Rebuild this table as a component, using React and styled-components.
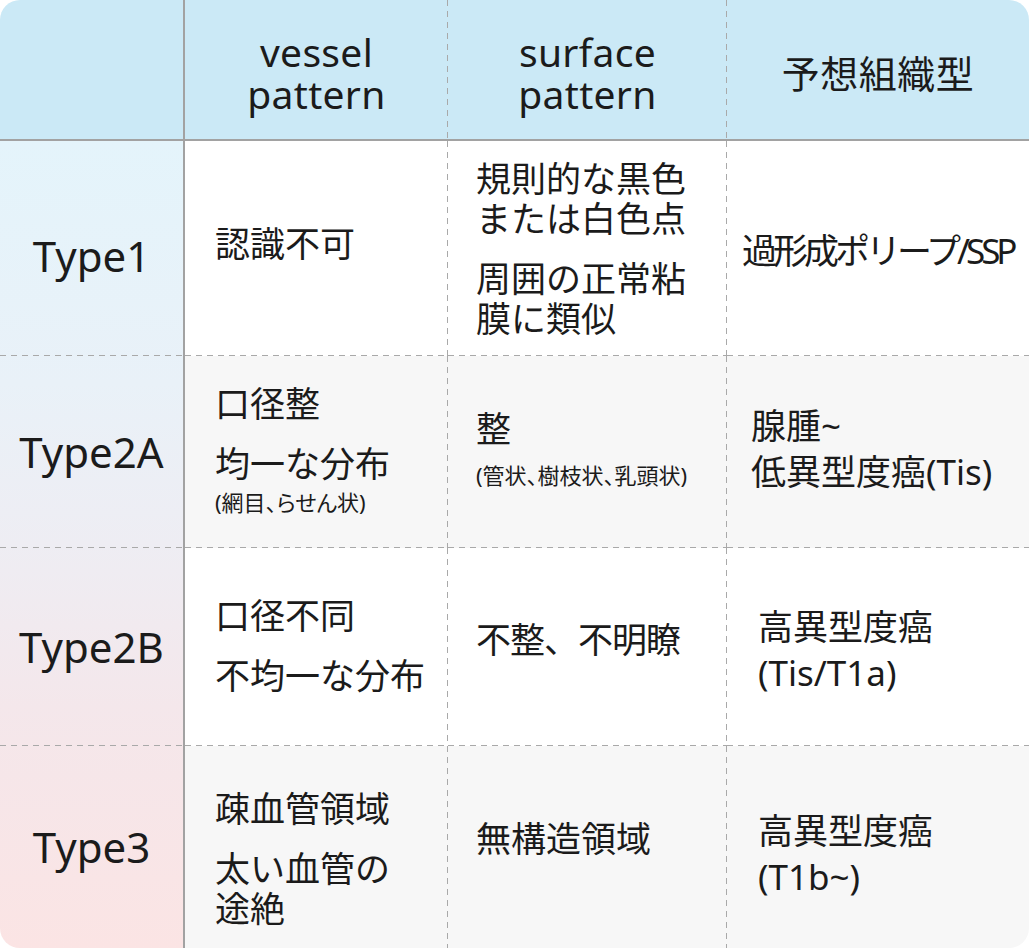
import React from "react";
import styled, { createGlobalStyle, css } from "styled-components";

const GlobalStyle = createGlobalStyle`
  html, body { margin: 0; padding: 0; background: #ffffff; }
  body {
    font-family: "Noto Sans", "Noto Sans CJK JP", sans-serif;
    color: #1b1b1b;
  }
`;

const LINE = "#a9a9a9";
const SOLID = "#a2a2a2";
const dashH = `repeating-linear-gradient(to right, ${LINE} 0 6px, transparent 6px 11px)`;
const dashV = `repeating-linear-gradient(to bottom, ${LINE} 0 6px, transparent 6px 11px)`;

const edges = ({ $right, $bottom, $bg }) => {
  const layers = [];
  const pos = [];
  const size = [];
  if ($right) {
    layers.push(dashV);
    pos.push("right top");
    size.push("1px 100%");
  }
  if ($bottom) {
    layers.push(dashH);
    pos.push("left bottom");
    size.push("100% 1px");
  }
  return css`
    background-color: ${$bg || "transparent"};
    background-image: ${layers.length ? layers.join(", ") : "none"};
    background-position: ${pos.length ? pos.join(", ") : "0 0"};
    background-size: ${size.length ? size.join(", ") : "auto"};
    background-repeat: no-repeat;
  `;
};

const Table = styled.div`
  width: 1029px;
  height: 948px;
  display: grid;
  grid-template-columns: 185px 263px 279px 302px;
  grid-template-rows: 141px 215px 192px 198px 202px;
  border-radius: 20px;
  overflow: hidden;
  background-color: #ffffff;
  background-image: linear-gradient(
    to bottom,
    #e4f4fb 0%,
    #e9f1f8 30%,
    #eeedf3 50%,
    #f4e7eb 70%,
    #fbe4e4 100%
  );
  background-position: left bottom;
  background-size: 185px 807px;
  background-repeat: no-repeat;
`;

const HeaderCell = styled.div`
  box-sizing: border-box;
  ${edges}
  background-color: #cbe9f6;
  border-bottom: 2px solid ${SOLID};
  border-right: ${(p) => (p.$solid ? `2px solid ${SOLID}` : "none")};
  display: flex;
  flex-direction: column;
  align-items: center;
  justify-content: center;
  padding-top: 6px;
  text-align: center;
  font-size: 39px;
  line-height: 42px;
  letter-spacing: 0.3px;
`;

const HeaderLine = styled.div`
  white-space: nowrap;
`;

const HeaderJa = styled.div`
  font-size: 38px;
  letter-spacing: 0.5px;
`;

const LabelCell = styled.div`
  box-sizing: border-box;
  ${edges}
  border-right: 2px solid ${SOLID};
  display: flex;
  align-items: center;
  justify-content: center;
  font-size: 42px;
  line-height: 1;
  padding-top: ${(p) => p.$pt || 0}px;
`;

const BodyCell = styled.div`
  box-sizing: border-box;
  ${edges}
  display: flex;
  flex-direction: column;
  justify-content: center;
  gap: 20px;
  padding-left: ${(p) => p.$pl}px;
  padding-top: ${(p) => Math.max(0, (p.$dy || 0) * 2)}px;
  padding-bottom: ${(p) => Math.max(0, -(p.$dy || 0) * 2)}px;
  font-size: 35px;
  line-height: ${(p) => p.$lh || 40}px;
`;

const Para = styled.div`
  margin: 0;
  white-space: pre-line;
  letter-spacing: ${(p) => p.$ls || 0}px;
`;

const Tight = styled.div`
  white-space: nowrap;
  letter-spacing: -4px;
`;

const Small = styled.div`
  font-size: 22px;
  line-height: 30px;
  margin-top: ${(p) => p.$mt || 0}px;
  font-feature-settings: "palt";
  white-space: nowrap;
`;

const rows = [
  {
    label: "Type1",
    pt: 14,
    bg: "#ffffff",
    vessel: { dy: -5, items: [["認識不可"]] },
    surface: { dy: 0, items: [["規則的な黒色\nまたは白色点"], ["周囲の正常粘\n膜に類似"]] },
    histo: { text: "過形成ポリープ/SSP", tight: true, pl: 15, dy: 2 },
  },
  {
    label: "Type2A",
    pt: 0,
    bg: "#f7f7f7",
    vessel: { dy: -2, items: [["口径整"], ["均一な分布", "(網目、らせん状)", 3]] },
    surface: { dy: -3, items: [["整", "(管状、樹枝状、乳頭状)", 11]] },
    histo: { text: "腺腫~\n低異型度癌(Tis)", pl: 24, dy: -3 },
  },
  {
    label: "Type2B",
    pt: 0,
    bg: "#ffffff",
    vessel: { dy: -1, items: [["口径不同"], ["不均一な分布"]] },
    surface: { dy: -7, ls: -1, items: [["不整、不明瞭"]] },
    histo: { text: "高異型度癌\n(Tis/T1a)", pl: 31, dy: 3 },
  },
  {
    label: "Type3",
    pt: 0,
    bg: "#f7f7f7",
    vessel: { dy: 12, items: [["疎血管領域"], ["太い血管の\n途絶"]] },
    surface: { dy: -8, items: [["無構造領域"]] },
    histo: { text: "高異型度癌\n(T1b~)", pl: 31, dy: 7 },
  },
];

function Paras({ items, ls }) {
  return items.map(([main, small, mt], i) => (
    <Para key={i} $ls={ls}>
      {main}
      {small && <Small $mt={mt}>{small}</Small>}
    </Para>
  ));
}

export default function App() {
  return (
    <>
      <GlobalStyle />
      <Table>
        <HeaderCell $solid />
        <HeaderCell $right>
          <HeaderLine>vessel</HeaderLine>
          <HeaderLine>pattern</HeaderLine>
        </HeaderCell>
        <HeaderCell $right>
          <HeaderLine>surface</HeaderLine>
          <HeaderLine>pattern</HeaderLine>
        </HeaderCell>
        <HeaderCell>
          <HeaderJa>予想組織型</HeaderJa>
        </HeaderCell>

        {rows.map((r, i) => {
          const last = i === rows.length - 1;
          return (
            <React.Fragment key={r.label}>
              <LabelCell $bottom={!last} $pt={r.pt}>
                {r.label}
              </LabelCell>
              <BodyCell $bg={r.bg} $right $bottom={!last} $pl={30} $dy={r.vessel.dy}>
                <Paras items={r.vessel.items} />
              </BodyCell>
              <BodyCell $bg={r.bg} $right $bottom={!last} $pl={28} $dy={r.surface.dy}>
                <Paras items={r.surface.items} ls={r.surface.ls} />
              </BodyCell>
              <BodyCell $bg={r.bg} $bottom={!last} $pl={r.histo.pl} $lh={46} $dy={r.histo.dy}>
                {r.histo.tight ? (
                  <Tight>{r.histo.text}</Tight>
                ) : (
                  <Para>{r.histo.text}</Para>
                )}
              </BodyCell>
            </React.Fragment>
          );
        })}
      </Table>
    </>
  );
}
